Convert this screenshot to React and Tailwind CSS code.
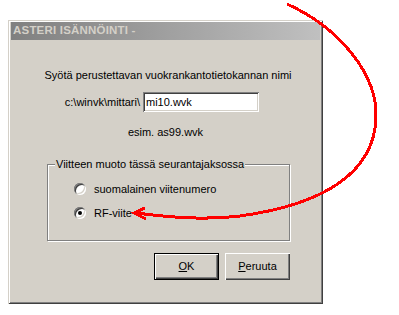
import React from 'react';

const font = { fontFamily: '"Liberation Sans", Arial, sans-serif' };

const Radio = ({ checked }) => (
  <span className="relative inline-block w-[12px] h-[12px] rounded-full bg-white shadow-[inset_1px_1px_#808080,inset_-1px_-1px_#ffffff,inset_2px_2px_#404040,inset_-2px_-2px_#d4d0c8]">
    {checked && <span className="absolute left-[4px] top-[4px] w-[4px] h-[4px] rounded-full bg-black" />}
  </span>
);

const Button = ({ children, isDefault }) => (
  <button
    className={
      isDefault
        ? 'w-[65px] h-[27px] border border-black bg-[#d4d0c8] text-black text-[11px] shadow-[inset_1px_1px_#ffffff,inset_-1px_-1px_#404040,inset_-2px_-2px_#808080]'
        : 'w-[65px] h-[27px] bg-[#d4d0c8] text-black text-[11px] shadow-[inset_1px_1px_#ffffff,inset_-1px_-1px_#404040,inset_-2px_-2px_#808080]'
    }
  >
    {children}
  </button>
);

export default function App() {
  return (
    <div className="relative w-[399px] h-[315px] bg-white overflow-hidden" style={font}>
      <div className="ml-[8px] pt-[20px]">
        <div className="w-[315px] h-[284px] bg-[#d4d0c8] pt-[2px] px-[3px] shadow-[inset_1px_1px_#d4d0c8,inset_-1px_-1px_#404040,inset_2px_2px_#ffffff,inset_-2px_-2px_#808080]">
          <div className="h-[18px] flex items-center pl-[2px] bg-gradient-to-r from-[#808080] to-[#c0c0c0]">
            <span className="text-[11.5px] font-bold text-[#d4d0c8] tracking-[0.2px]">ASTERI ISÄNNÖINTI -</span>
          </div>

          <div className="flex flex-col items-center text-[11px] text-black">
            <div className="mt-[28px] h-[14px] leading-[14px] pl-[5px]">Syötä perustettavan vuokrankantotietokannan nimi</div>

            <div className="mt-[10px] w-full flex items-center">
              <div className="w-[132px] text-right pr-[3px]">c:\winvk\mittari\</div>
              <div className="w-[116px] h-[20px] bg-white pl-[3px] flex items-center shadow-[inset_1px_1px_#808080,inset_-1px_-1px_#ffffff,inset_2px_2px_#404040,inset_-2px_-2px_#d4d0c8]">
                mi10.wvk
              </div>
            </div>

            <div className="mt-[13px] h-[14px] leading-[14px]">esim. as99.wvk</div>
          </div>

          <div className="ml-[36px] mt-[25px] relative w-[243px] h-[77px] border border-[#808080] shadow-[inset_1px_1px_#ffffff,1px_1px_#ffffff]">
            <span className="absolute left-[7px] top-[-8px] px-[1px] bg-[#d4d0c8] text-[11px] leading-[14px] text-black">
              Viitteen muoto tässä seurantajaksossa
            </span>
            <div className="pl-[26px] pt-[18px] flex flex-col gap-[12px] text-[11px] text-black">
              <label className="flex items-center gap-[8px] h-[12px]">
                <Radio />
                <span>suomalainen viitenumero</span>
              </label>
              <label className="flex items-center gap-[8px] h-[12px]">
                <Radio checked />
                <span>RF-viite</span>
              </label>
            </div>
          </div>

          <div className="mt-[12px] ml-[143px] flex gap-[6px]">
            <Button isDefault>
              <span className="underline">O</span>K
            </Button>
            <Button>
              <span className="underline">P</span>eruuta
            </Button>
          </div>
        </div>
      </div>

      <svg className="absolute inset-0 pointer-events-none" width="399" height="315" viewBox="0 0 399 315" shapeRendering="crispEdges">
        <path
          d="M287 4 C 340 28, 378 75, 376 118 C 374 175, 320 205, 240 216 C 200 221, 160 216, 136 213"
          fill="none"
          stroke="#ff0000"
          strokeWidth="3"
        />
        <path d="M145 208 L134 213 L146 219" fill="none" stroke="#ff0000" strokeWidth="3" />
      </svg>
    </div>
  );
}
